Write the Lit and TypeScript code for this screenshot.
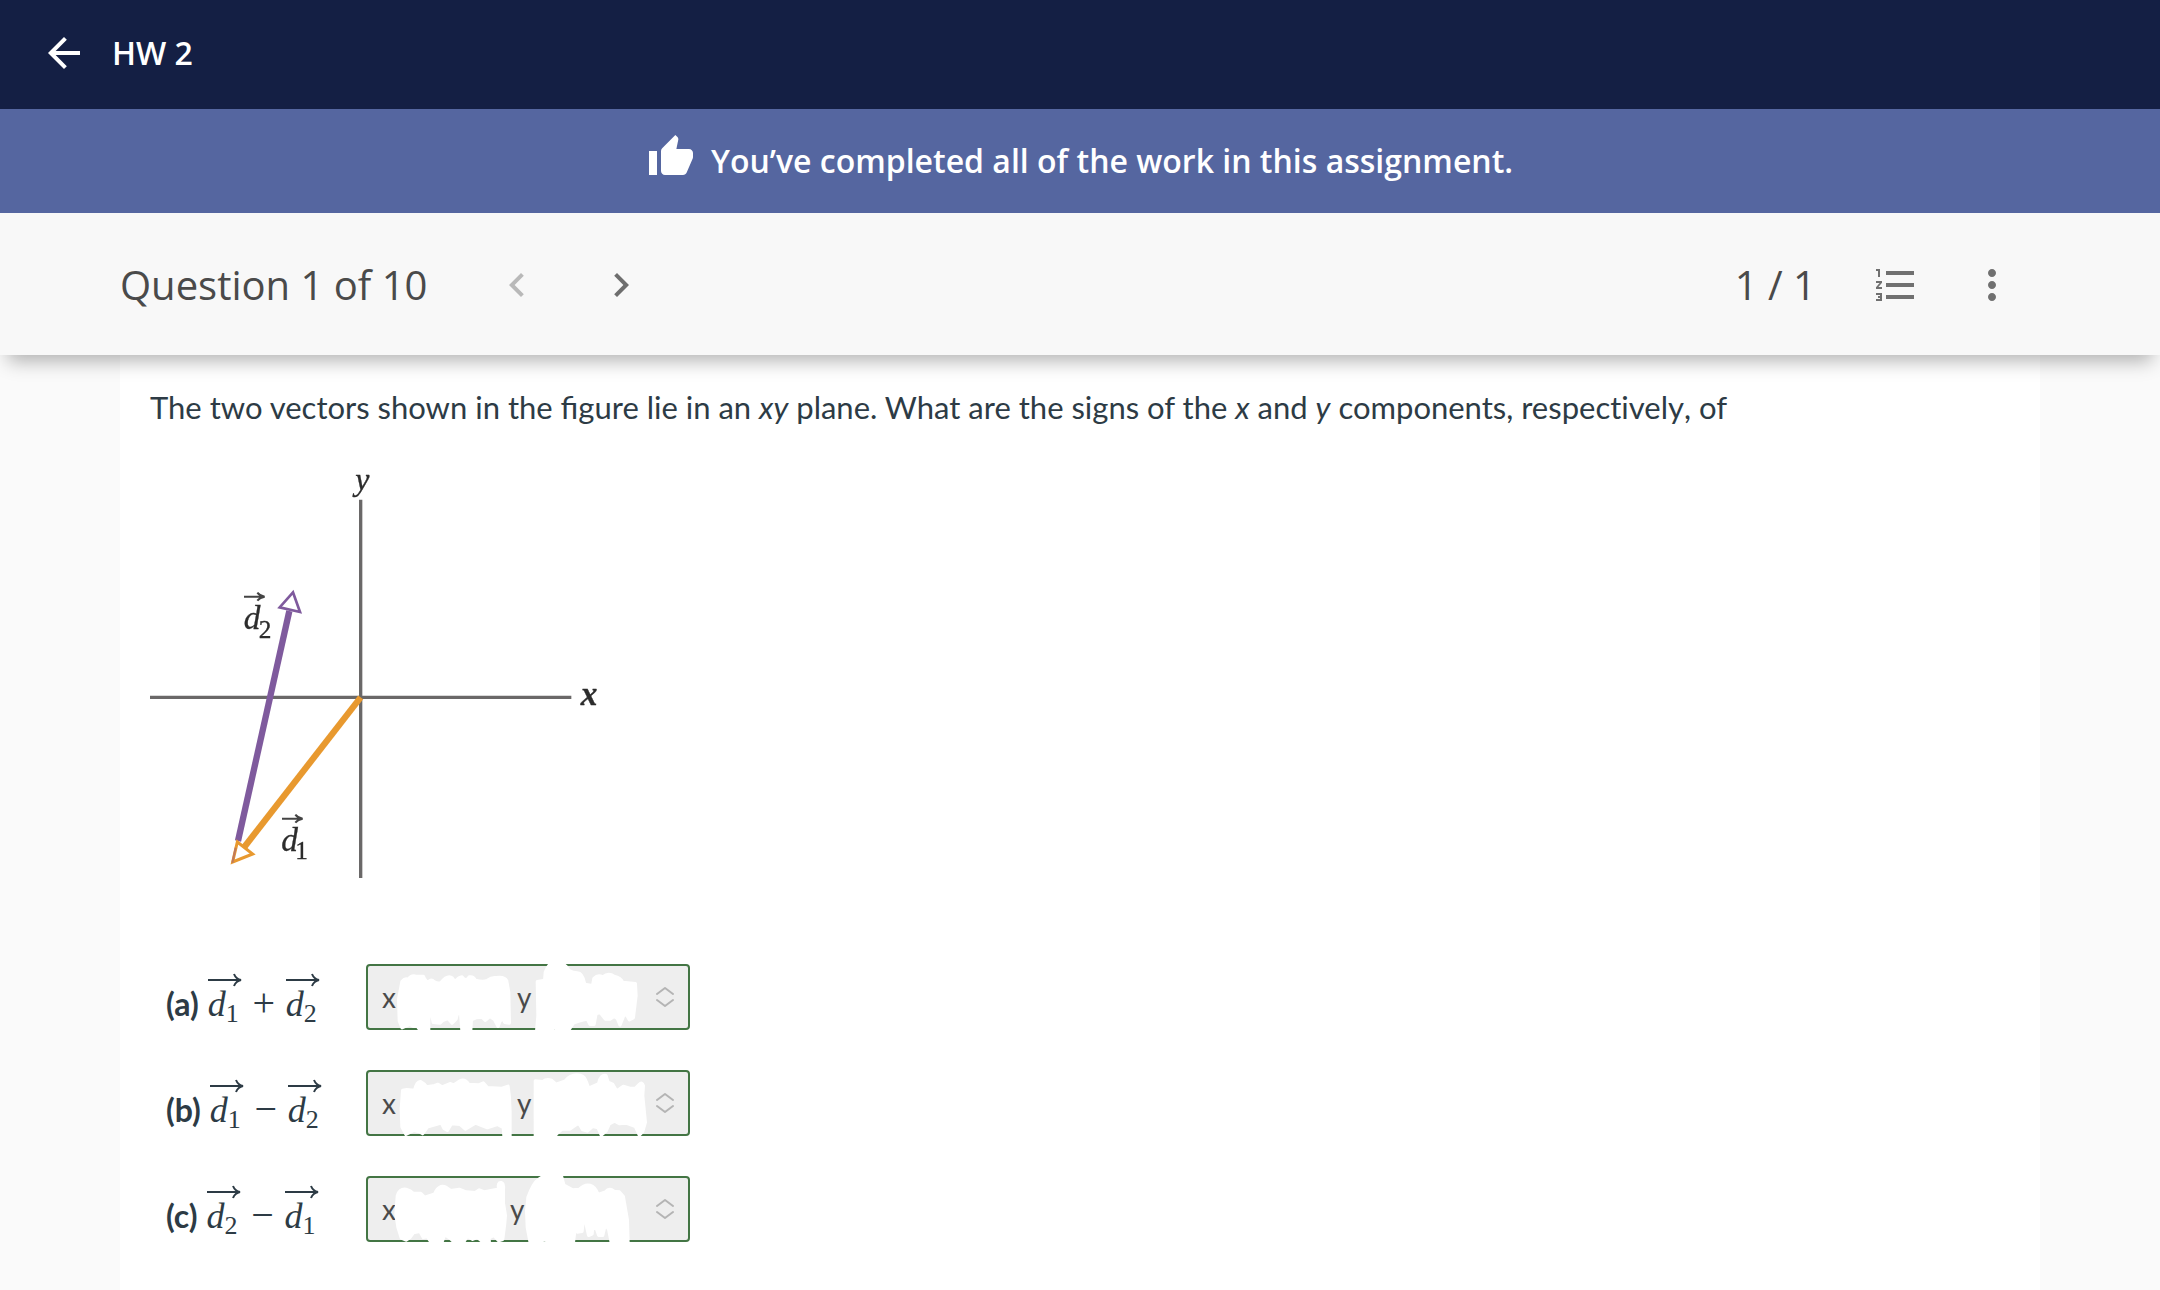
import { LitElement, html, svg, css } from "lit";
import { customElement, state } from "lit/decorators.js";

interface Part {
  id: string;
  first: string;
  op: string;
  second: string;
  gap: number;
  view: string;
  marks: string[];
}

const PARTS: Part[] = [
  {
    id: "a",
    first: "1",
    op: "+",
    second: "2",
    gap: 17,
    view: "18 45 972 198",
    marks: [
      "M126 98Q136 86 144 92Q154 78 168 82L190 82Q198 100 206 98Q214 90 222 98Q236 106 244 100Q256 84 268 84Q278 84 284 100Q296 84 306 84Q318 100 328 84Q340 82 346 94Q372 100 382 94Q396 84 408 86Q434 82 440 96L446 130L448 222L434 220L430 208L420 216L414 232L404 212L390 202L376 214L366 204L348 206L334 212L332 246L306 246L302 194L292 194L288 210L276 222L264 208L248 214L240 222L220 220L216 202L206 196L206 246L182 246L172 232L160 232L150 226L126 236L118 216L116 150Z",
      "M532 98L554 94L556 70Q566 40 590 40Q614 40 626 64Q640 72 652 72Q668 72 674 106L698 110L702 88Q714 76 728 84Q746 70 762 82Q782 86 788 100L826 104L828 140L820 206L808 212L798 194L790 202L780 228L772 208L762 202L750 210L736 210L720 190L708 194L702 226L690 226L682 210L658 216L640 222L628 240L592 242L578 232L578 246L530 246L534 200Z",
    ],
  },
  {
    id: "b",
    first: "1",
    op: "−",
    second: "2",
    gap: 17,
    view: "18 33 972 198",
    marks: [
      "M128 94L140 92L164 94Q170 66 182 68Q194 74 200 84L224 80L234 76L246 84L270 74L282 78L300 66Q314 58 326 76L356 78L370 72L382 86L426 88L444 82L448 114L450 160L450 232L432 232L430 206L412 196L382 206L346 192L316 210L300 196L274 194L262 214L252 208L244 192L202 204L188 224L178 218L162 214L138 226L126 204L124 150Z",
      "M526 66L548 68Q560 58 574 64L588 76L616 66Q630 48 650 48Q672 48 678 66L686 88L716 74Q722 46 738 50L744 70L758 76L770 96L790 82L810 88L826 88L838 76Q846 68 850 80L848 110L856 190L848 218L838 228L826 202L798 192L778 194L764 186L748 194L738 216L724 228L714 206L698 202L682 216L668 212L656 192L630 210L606 210L588 226L586 234L526 234Z",
    ],
  },
  {
    id: "c",
    first: "2",
    op: "−",
    second: "1",
    gap: 16,
    view: "18 36 972 198",
    marks: [
      "M112 96Q118 74 138 76Q152 80 160 88L182 88L194 100L224 90Q236 60 258 70L272 80L298 76L318 84L346 86L358 78L374 84L404 78L416 76Q412 54 424 56Q432 58 430 78L430 118L436 154L434 178L428 226L416 230L402 214L386 222L388 232L366 232L352 220L338 226L322 216L310 236L284 236L270 222L254 212L246 234L214 236L202 218L190 220L180 202L160 206L150 220L138 228L124 222L114 190L108 150Z",
      "M504 100Q520 56 536 46L552 36L604 36L612 64L638 78L658 76Q674 60 690 64Q706 68 714 92L736 84Q748 70 762 82L778 84L790 98L802 168L804 236L754 236L746 196L736 180L728 214L716 214L710 196L698 190L696 210L686 214L678 178L670 166L666 202L652 204L646 186L640 236L564 236L556 226L540 232L510 232L502 190L500 140Z",
    ],
  },
];

const NBSP = "\u00a0";

@customElement("app-root")
export class AppRoot extends LitElement {
  @state() private question = 1;

  static styles = css`
    :host {
      display: flex;
      flex-direction: column;
      min-height: 100vh;
      background: #fafafa;
      color: #2d3b45;
      font-family: "Open Sans", sans-serif;
    }
    * {
      box-sizing: border-box;
    }
    h1,
    h2,
    p {
      margin: 0;
    }
    button {
      display: flex;
      align-items: center;
      justify-content: center;
      padding: 0;
      border: 0;
      background: none;
      color: inherit;
      cursor: pointer;
    }
    .icon {
      display: block;
      width: 48px;
      height: 48px;
      fill: currentColor;
    }
    .header {
      display: flex;
      align-items: center;
      gap: 24px;
      padding: 29px 40px 32px;
      background: #141f44;
      color: #fff;
    }
    .back {
      color: #fff;
    }
    .title {
      font-size: 32px;
      line-height: 48px;
      font-weight: 600;
    }
    .banner {
      display: flex;
      justify-content: center;
      gap: 16px;
      padding: 24px 40px 28px;
      background: #5566a0;
      color: #fff;
    }
    .banner p {
      font-size: 32px;
      line-height: 48px;
      padding-top: 4px;
      font-weight: 600;
    }
    .toolbar {
      position: relative;
      display: flex;
      align-items: center;
      padding: 48px 120px 46px;
      background: #f8f8f8;
      color: #4a4a4a;
      box-shadow: 0 14px 18px -8px rgba(0, 0, 0, 0.3);
    }
    .toolbar h2,
    .score {
      font-size: 40px;
      line-height: 48px;
      font-weight: 400;
    }
    .pager {
      display: flex;
      gap: 56px;
      margin-left: 66px;
      color: #6e6e6e;
    }
    .pager button:disabled {
      opacity: 0.45;
      cursor: default;
    }
    .score {
      margin-left: auto;
      margin-right: 32px;
    }
    .tools {
      display: flex;
      color: #707070;
    }
    .tools button {
      width: 96px;
    }
    .card {
      flex: 1;
      margin: 0 120px;
      padding: 28px 30px 46px;
      background: #fff;
      font-family: Lato, sans-serif;
    }
    .prompt {
      font-size: 31px;
      line-height: 48px;
    }
    .plain {
      font-variant-ligatures: none;
    }
    .figure {
      display: block;
      width: 448px;
      max-width: 100%;
      margin: 41px 0 86px;
      overflow: visible;
      filter: blur(0.6px);
    }
    .figure text {
      font-family: "Liberation Serif", serif;
      fill: #2c2c2c;
      stroke: #2c2c2c;
      stroke-width: 1;
    }
    .it {
      font-style: italic;
    }
    .parts {
      display: grid;
      gap: 40px;
      padding-left: 16px;
    }
    .part {
      display: grid;
      grid-template-columns: 200px minmax(0, 324px);
      align-items: center;
    }
    .part label {
      display: flex;
      align-items: baseline;
      height: 66px;
      padding-top: 15px;
      font-size: 32px;
      line-height: 48px;
    }
    .part b {
      margin-right: 9px;
      font-weight: 700;
    }
    .vec {
      position: relative;
      width: 34px;
      font: italic 36px/48px "Liberation Serif", serif;
      white-space: nowrap;
    }
    .vec svg {
      position: absolute;
      left: 0;
      top: -7px;
      width: 34px;
      height: 14px;
      fill: none;
      stroke: currentColor;
      stroke-width: 2;
    }
    .vec sub {
      font-size: 26px;
      font-style: normal;
      line-height: 0;
      vertical-align: -6px;
    }
    .op {
      width: 44px;
      text-align: center;
      font: 40px/48px "Liberation Serif", serif;
    }
    .field {
      position: relative;
    }
    select {
      appearance: none;
      display: block;
      width: 100%;
      height: 66px;
      padding: 0 44px 0 14px;
      border: 2px solid #437544;
      border-radius: 4px;
      background: #eee;
      color: #4a4a4a;
      font: 28px/40px Lato, sans-serif;
    }
    .marks {
      position: absolute;
      left: 0;
      top: 0;
      width: 100%;
      height: 66px;
      overflow: visible;
      pointer-events: none;
    }
    .marks path {
      fill: #fff;
      stroke: #fff;
      stroke-width: 10;
      stroke-linejoin: round;
    }
    .caret {
      position: absolute;
      right: 16px;
      top: 22px;
      width: 18px;
      height: 22px;
      fill: none;
      stroke: #b4b4b4;
      stroke-width: 2;
      stroke-linecap: round;
      stroke-linejoin: round;
      pointer-events: none;
    }
  `;

  private icon(d: string) {
    return html`<svg class="icon" viewBox="0 0 24 24" aria-hidden="true"><path d=${d}></path></svg>`;
  }

  private vector(index: string) {
    return html`<span class="vec"
      ><svg viewBox="0 0 34 14" aria-hidden="true"><path d="M0 7H33M26 1Q28 6 33 7Q28 8 26 13"></path></svg
      >d<sub>${index}</sub></span
    >`;
  }

  private part(p: Part) {
    return html`
      <div class="part">
        <label for=${"part-" + p.id}
          ><b>(${p.id})</b>${this.vector(p.first)}<span class="op">${p.op}</span>${this.vector(p.second)}</label
        >
        <div class="field">
          <select id=${"part-" + p.id}>
            <option>x${NBSP.repeat(p.gap)}y</option>
          </select>
          <svg class="marks" viewBox=${p.view} preserveAspectRatio="none" aria-hidden="true">
            ${p.marks.map((d) => svg`<path d=${d}></path>`)}
          </svg>
          <svg class="caret" viewBox="0 0 18 22" aria-hidden="true">
            <path d="M1 8L9 2L17 8M1 14L9 20L17 14"></path>
          </svg>
        </div>
      </div>
    `;
  }

  private figure() {
    return html`
      <svg class="figure" viewBox="60 69 1344 1218" role="img" aria-label="Vectors d1 and d2 in the xy plane">
        <path d="M60 745H1324M692 152V1287" stroke="#6a6868" stroke-width="10" fill="none"></path>
        <path d="M324 1176L478 486" stroke="#7f5a9d" stroke-width="19" fill="none"></path>
        <path d="M489 430L449 475L510 489Z" fill="#fff" stroke="#7f5a9d" stroke-width="8"></path>
        <path d="M692 745L343 1194" stroke="#e8992f" stroke-width="19" fill="none"></path>
        <path d="M308 1239L322 1179L368 1215Z" fill="#fff" stroke="#e8992f" stroke-width="9"></path>
        <path d="M307 1241L317 1196" stroke="#c0795a" stroke-width="6"></path>
        <g fill="none" stroke="#444" stroke-width="6">
          <path d="M342 443H402M382 431Q390 441 404 443Q390 445 382 455"></path>
          <path d="M456 1109H516M496 1097Q504 1107 518 1109Q504 1111 496 1121"></path>
        </g>
        <text class="it" x="676" y="122" font-size="96">y</text>
        <text class="it" x="1352" y="768" font-size="100" font-weight="700">x</text>
        <text class="it" x="341" y="541" font-size="100">d</text>
        <text x="386" y="567" font-size="76">2</text>
        <text class="it" x="454" y="1206" font-size="100">d</text>
        <text x="496" y="1230" font-size="76">1</text>
      </svg>
    `;
  }

  render() {
    return html`
      <header class="header">
        <button class="back" aria-label="Back">
          ${this.icon("M20 11H7.83l5.59-5.59L12 4l-8 8 8 8 1.41-1.41L7.83 13H20v-2z")}
        </button>
        <h1 class="title">HW 2</h1>
      </header>
      <div class="banner" role="status">
        ${this.icon(
          "M1 21h4V9H1v12zm22-11c0-1.1-.9-2-2-2h-6.31l.95-4.57.03-.32c0-.41-.17-.79-.44-1.06L14.17 1 7.59 7.59C7.22 7.95 7 8.45 7 9v10c0 1.1.9 2 2 2h9c.83 0 1.54-.5 1.84-1.22l3.02-7.05c.09-.23.14-.47.14-.73v-2z",
        )}
        <p>You’ve completed all of the work in this assignment.</p>
      </div>
      <nav class="toolbar" aria-label="Questions">
        <h2>Question ${this.question} of 10</h2>
        <div class="pager">
          <button aria-label="Previous question" ?disabled=${this.question === 1} @click=${() => this.question--}>
            ${this.icon("M15.41 7.41L14 6l-6 6 6 6 1.41-1.41L10.83 12z")}
          </button>
          <button aria-label="Next question" ?disabled=${this.question === 10} @click=${() => this.question++}>
            ${this.icon("M10 6L8.59 7.41 13.17 12l-4.58 4.59L10 18l6-6z")}
          </button>
        </div>
        <span class="score">1 / 1</span>
        <div class="tools">
          <button aria-label="Question list">
            ${this.icon(
              "M2 17h2v.5H3v1h1v.5H2v1h3v-4H2v1zm1-9h1V4H2v1h1v3zm-1 3h1.8L2 13.1v.9h3v-1H3.2L5 10.9V10H2v1zm5-6v2h14V5H7zm0 14h14v-2H7v2zm0-6h14v-2H7v2z",
            )}
          </button>
          <button aria-label="More options">
            ${this.icon(
              "M12 8c1.1 0 2-.9 2-2s-.9-2-2-2-2 .9-2 2 .9 2 2 2zm0 2c-1.1 0-2 .9-2 2s.9 2 2 2 2-.9 2-2-.9-2-2-2zm0 6c-1.1 0-2 .9-2 2s.9 2 2 2 2-.9 2-2-.9-2-2-2z",
            )}
          </button>
        </div>
      </nav>
      <main class="card">
        <p class="prompt">
          The two vectors shown in the figure lie in an <i>xy</i> plane. What are the signs of the <i>x</i> and
          <i>y</i> components, <span class="plain">respectively</span>, of
        </p>
        ${this.figure()}
        <div class="parts">${PARTS.map((p) => this.part(p))}</div>
      </main>
    `;
  }
}
